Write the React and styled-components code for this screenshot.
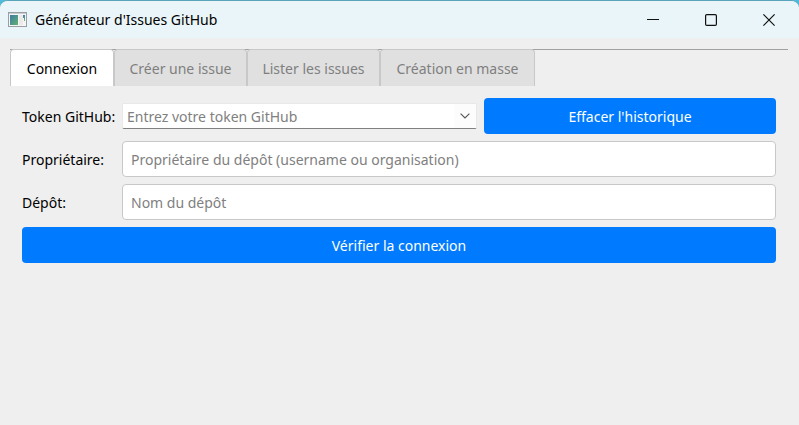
import React, { useState } from "react";
import styled, { createGlobalStyle } from "styled-components";

const GlobalStyle = createGlobalStyle`
  *, *::before, *::after { box-sizing: border-box; }
  body { margin: 0; background: #4fbbdc; }
  body, button, input {
    font-family: "Noto Sans", "Open Sans", sans-serif;
    font-size: 14px;
    line-height: 20px;
  }
`;

const Window = styled.div`
  min-height: 100vh;
  display: flex;
  flex-direction: column;
  overflow: hidden;
  border-top: 1px solid #5aa4bb;
  border-radius: 8px 8px 0 0;
  background: #efefef;
  color: #000;
`;

const TitleBar = styled.header`
  height: 37px;
  display: flex;
  align-items: center;
  padding: 0 1px 0 8px;
  background: #e9f5f8;
`;

const Title = styled.h1`
  flex: 1;
  margin: 0 0 0 8px;
  font-size: 14px;
  font-weight: 400;
`;

const WindowButton = styled.button`
  width: 58px;
  height: 36px;
  display: grid;
  place-items: center;
  padding: 0;
  border: 0;
  background: transparent;
  color: #111;
`;

const Panel = styled.main`
  flex: 1;
  padding: 11px 11px 0 10px;
`;

const TabBar = styled.div`
  display: flex;
  border-top: 1px solid #a0a0a0;
`;

const Tab = styled.button`
  flex: 0 0 ${(p) => p.$width}px;
  height: 37px;
  margin-top: -1px;
  padding: 2px 0 0;
  border: 1px solid #c8c8c8;
  border-bottom: 0;
  border-radius: 4px 4px 0 0;
  background: ${(p) => (p["aria-selected"] ? "#fff" : "#e0e0e0")};
  color: ${(p) => (p["aria-selected"] ? "#000" : "#7f7f7f")};
  white-space: nowrap;
`;

const Form = styled.form`
  display: grid;
  grid-template-columns: 93px 1fr;
  gap: 7px;
  align-items: center;
  padding: 12px 12px 0;
`;

const Label = styled.label`
  padding-top: 2px;
  white-space: nowrap;
`;

const TokenRow = styled.div`
  display: grid;
  grid-template-columns: 355fr 292fr;
  gap: 7px;
  align-items: center;
`;

const Combo = styled.div`
  height: 26px;
  display: flex;
  border: 1px solid #e8e8e8;
  border-bottom-color: #808080;
  border-radius: 2px;
  background: #fff;
`;

const ComboInput = styled.input`
  flex: 1;
  min-width: 0;
  padding: 2px 4px 0;
  border: 0;
  outline: 0;
  background: transparent;
  &::placeholder { color: #808080; opacity: 1; }
`;

const ComboButton = styled.button`
  width: 22px;
  display: grid;
  place-items: center;
  padding: 0;
  border: 0;
  background: #fcfcfc;
  color: #555;
`;

const TextField = styled.input`
  width: 100%;
  height: 36px;
  padding: 0 8px;
  border: 1px solid #c8c8c8;
  border-radius: 4px;
  background: #fff;
  &::placeholder { color: #808080; opacity: 1; }
`;

const PrimaryButton = styled.button`
  height: 36px;
  padding: 2px 8px 0;
  border: 0;
  border-radius: 4px;
  background: #007bff;
  color: #fff;
  grid-column: ${(p) => (p.$wide ? "1 / -1" : "auto")};
`;

const tabs = [
  { name: "Connexion", width: 104 },
  { name: "Créer une issue", width: 133 },
  { name: "Lister les issues", width: 133 },
  { name: "Création en masse", width: 155 },
];

function AppIcon() {
  return (
    <svg width="19" height="15" viewBox="0 0 19 15" aria-hidden="true">
      <defs>
        <linearGradient id="screen" x1="0" y1="0" x2="1" y2="1">
          <stop offset="0" stopColor="#3f78a8" />
          <stop offset="1" stopColor="#5fb56c" />
        </linearGradient>
        <linearGradient id="strip" x1="0" y1="0" x2="0" y2="1">
          <stop offset="0" stopColor="#4779b4" />
          <stop offset="1" stopColor="#67b871" />
        </linearGradient>
      </defs>
      <rect x="0.5" y="0.5" width="18" height="14" fill="#f5f5f5" stroke="#9a9fa3" />
      <rect x="1" y="1" width="17" height="1" fill="#c8cdd0" />
      <rect x="2" y="3" width="8" height="10" fill="url(#screen)" />
      <rect x="11" y="3" width="4" height="10" fill="#eee9e9" />
      <path d="M15 3h2v6h-1V6h-1z" fill="url(#strip)" />
    </svg>
  );
}

export default function App() {
  const [active, setActive] = useState(0);
  return (
    <>
      <GlobalStyle />
      <Window>
        <TitleBar>
          <AppIcon />
          <Title>Générateur d'Issues GitHub</Title>
          <WindowButton aria-label="Réduire">
            <svg width="12" height="12" viewBox="0 0 12 12" stroke="currentColor">
              <path d="M0 5.5h12" />
            </svg>
          </WindowButton>
          <WindowButton aria-label="Agrandir">
            <svg width="12" height="12" viewBox="0 0 12 12" fill="none" stroke="currentColor" strokeWidth="1.2">
              <rect x="0.6" y="0.6" width="10.8" height="10.8" rx="1.2" />
            </svg>
          </WindowButton>
          <WindowButton aria-label="Fermer">
            <svg width="12" height="12" viewBox="0 0 12 12" stroke="currentColor" strokeWidth="1.2">
              <path d="M0.4 0.4l11.2 11.2M11.6 0.4L0.4 11.6" />
            </svg>
          </WindowButton>
        </TitleBar>
        <Panel>
          <TabBar role="tablist">
            {tabs.map((tab, i) => (
              <Tab
                key={tab.name}
                role="tab"
                aria-selected={i === active}
                $width={tab.width}
                onClick={() => setActive(i)}
              >
                {tab.name}
              </Tab>
            ))}
          </TabBar>
          <Form onSubmit={(e) => e.preventDefault()}>
            <Label htmlFor="token">Token GitHub:</Label>
            <TokenRow>
              <Combo>
                <ComboInput id="token" role="combobox" aria-expanded="false" placeholder="Entrez votre token GitHub" />
                <ComboButton type="button" aria-label="Afficher l'historique">
                  <svg width="10" height="6" viewBox="0 0 10 6" fill="none" stroke="currentColor" strokeWidth="1.1">
                    <path d="M0.6 0.6L5 5l4.4-4.4" />
                  </svg>
                </ComboButton>
              </Combo>
              <PrimaryButton type="button">Effacer l'historique</PrimaryButton>
            </TokenRow>
            <Label htmlFor="owner">Propriétaire:</Label>
            <TextField id="owner" placeholder="Propriétaire du dépôt (username ou organisation)" />
            <Label htmlFor="repo">Dépôt:</Label>
            <TextField id="repo" placeholder="Nom du dépôt" />
            <PrimaryButton type="submit" $wide>
              Vérifier la connexion
            </PrimaryButton>
          </Form>
        </Panel>
      </Window>
    </>
  );
}
